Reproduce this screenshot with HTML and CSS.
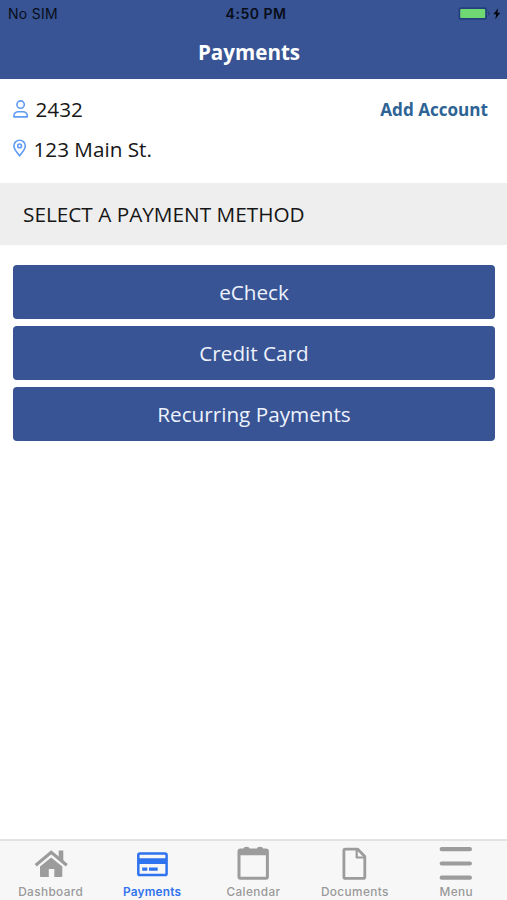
FILE: index.html
```html
<!DOCTYPE html>
<html lang="en">
<head>
<meta charset="utf-8">
<title>Payments</title>
<link rel="stylesheet" href="styles.css">
</head>
<body>
<div class="app">
  <header class="header">
    <div class="status">
      <span class="carrier">No SIM</span>
      <span class="clock">4:50 PM</span>
      <span class="power">
        <svg width="44" height="16" viewBox="0 0 44 16">
          <rect x="0.500" y="1.200" width="28.500" height="12.500" rx="2.500" fill="#243f7c"/>
          <rect x="2.200" y="2.900" width="25" height="9.200" rx="1" fill="#6fd873"/>
          <path d="M30.300 5.500v4q1.300-.6 1.300-2t-1.300-2z" fill="#20386f"/>
          <path d="M40.200 2.200l-4.800 6h2.800l-.9 5 4.900-6.400h-2.900z" fill="#03060c"/>
        </svg>
      </span>
    </div>
    <h1 class="title">Payments</h1>
  </header>
  <section class="account">
    <div class="row">
      <svg class="icon" width="16" height="18" viewBox="0 0 16 18" fill="none" stroke="#609bf5" stroke-width="1.600">
        <circle cx="7.600" cy="4.600" r="3.700"/>
        <path d="M.9 16.900v-.8c0-2.700 2-4.400 4.400-4.400h4.600c2.400 0 4.400 1.700 4.400 4.400v.8z" stroke-linejoin="round"/>
      </svg>
      <span class="number">2432</span>
      <a class="add">Add Account</a>
    </div>
    <div class="row">
      <svg class="icon" width="14" height="18" viewBox="0 0 14 18" fill="none" stroke="#609bf5" stroke-width="1.600">
        <path d="M6.600 16.900C4.500 13.700.9 10.500.9 6.900a5.700 5.700 0 0 1 11.400 0c0 3.600-3.600 6.800-5.700 10z" stroke-linejoin="round"/>
        <circle cx="6.600" cy="6.900" r="1.900"/>
      </svg>
      <span class="street">123 Main St.</span>
    </div>
  </section>
  <h2 class="section">SELECT A PAYMENT METHOD</h2>
  <main class="methods">
    <button class="method">eCheck</button>
    <button class="method">Credit Card</button>
    <button class="method">Recurring Payments</button>
  </main>
  <nav class="tabs">
    <a class="tab">
      <svg width="36" height="38" viewBox="0 0 36 38" fill="#9c9c9c">
        <path d="M18.200 14.500l11.100 9V33q0 1-1 1h-7v-8h-5.500v8H8q-1 0-1-1v-9.500z"/>
        <path d="M2.700 22.300L18.200 9.300l15.600 13" fill="none" stroke="#9c9c9c" stroke-width="3.200"/>
        <path d="M25.700 7.500h4.600V19l-4.600-3.800z"/>
      </svg>
      <span>Dashboard</span>
    </a>
    <a class="tab active">
      <svg width="36" height="38" viewBox="0 0 36 38">
        <rect x="4.300" y="10.600" width="28.300" height="21.400" rx="1.600" fill="none" stroke="#2f73ee" stroke-width="2.500"/>
        <path d="M4 15.200h29v5.800H4zM8.200 24.500h5.100v3.200H8.200zM15 24.500h8.700v3.200H15z" fill="#2f73ee"/>
      </svg>
      <span>Payments</span>
    </a>
    <a class="tab">
      <svg width="36" height="38" viewBox="0 0 36 38">
        <rect x="4" y="7" width="28.400" height="28.200" rx="1.500" fill="none" stroke="#9c9c9c" stroke-width="3"/>
        <path d="M3.500 6.500h29v5.700h-29zM8.500 6q0-2.200 3-2.200T14.500 6zM22 6q0-2.200 3-2.200T28 6z" fill="#9c9c9c"/>
      </svg>
      <span>Calendar</span>
    </a>
    <a class="tab">
      <svg width="36" height="38" viewBox="0 0 36 38" fill="none" stroke="#9c9c9c" stroke-width="2.800" stroke-linejoin="round">
        <path d="M8.300 6.200h12.500l7 7.300v20.400q0 1.400-1.400 1.400H8.300q-1.400 0-1.400-1.400V7.600q0-1.400 1.400-1.400z"/>
        <path d="M19.700 6.200v8.300h8" stroke-width="2.200"/>
      </svg>
      <span>Documents</span>
    </a>
    <a class="tab">
      <svg width="36" height="38" viewBox="0 0 36 38" fill="none" stroke="#9c9c9c" stroke-width="4.200" stroke-linecap="round">
        <path d="M3.700 6.200h28.200M3.700 20.500h28.200M3.700 34.700h28.200"/>
      </svg>
      <span>Menu</span>
    </a>
  </nav>
</div>
</body>
</html>
```

FILE: styles.css
```css
* { box-sizing: border-box; }
body { margin: 0; background: #fff; color: #161616; font-family: "Open Sans", "Noto Sans", sans-serif; }
.app { height: 900px; display: flex; flex-direction: column; overflow: hidden; }
h1, h2 { margin: 0; }
svg { display: block; flex: none; }
.header { height: 79px; flex: none; background: #385494; }
.status { height: 28px; display: grid; grid-template-columns: 1fr auto 1fr; align-items: center; padding: 0 5px 0 8px; color: #080d18; font: 14px/28px Inter, sans-serif; }
.carrier { letter-spacing: .3px; }
.clock { font-weight: 600; letter-spacing: .5px; margin-left: 2px; }
.power { justify-self: end; }
.title { color: #fff; font-size: 20.6px; line-height: 28px; font-weight: 700; text-align: center; padding: 10px 9px 0 0; }
.account { height: 104px; flex: none; padding: 11px 19px 0 13px; }
.row { height: 39.5px; display: flex; align-items: center; font-size: 20.7px; }
.number { margin-left: 6.5px; margin-top: -1px; }
.street { margin-left: 6.5px; }
.icon { margin-top: -2.5px; }
.add { margin-left: auto; color: #2d6395; font-size: 17.1px; font-weight: 700; }
.section { height: 62px; flex: none; padding-left: 23px; background: #eee; font-size: 20.75px; line-height: 62px; font-weight: 400; }
.methods { flex: 1; display: flex; flex-direction: column; gap: 7px; padding: 20px 12px 0 13px; }
.method { height: 54px; border: 0; border-radius: 4px; background: #385494; color: #edf2fd; font: 20.7px/54px "Open Sans", sans-serif; padding: 0; }
.tabs { height: 61px; flex: none; display: grid; grid-template-columns: repeat(5, 1fr); border-top: 2px solid #e2e2e2; background: #f7f7f7; }
.tab { display: flex; flex-direction: column; align-items: center; padding-top: 2px; color: #999; font: 500 11.8px/16px Inter, sans-serif; letter-spacing: .4px; }
.tab span { margin-top: 3px; }
.active { color: #2f73ee; font-weight: 600; letter-spacing: .2px; }
```
